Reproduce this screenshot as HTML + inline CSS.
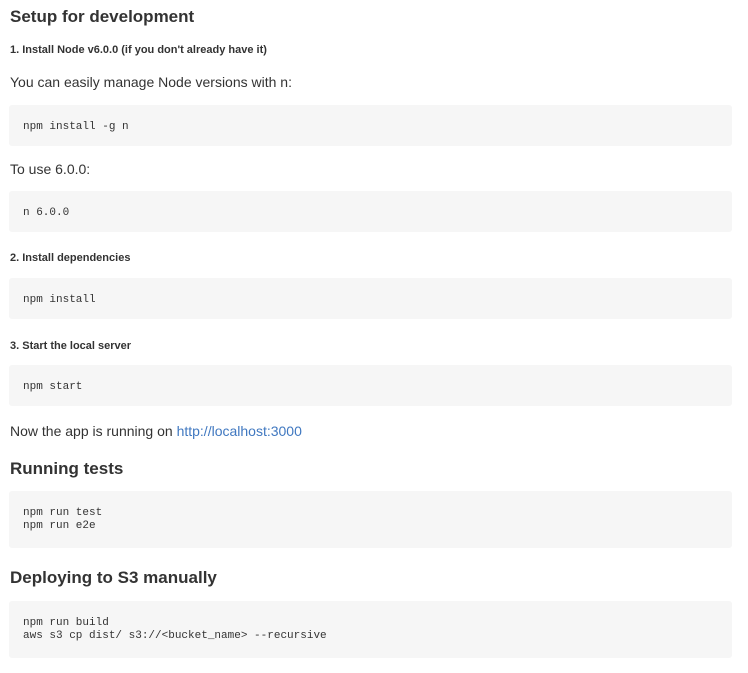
<!DOCTYPE html>
<html><head><meta charset="utf-8"><style>
body{margin:0;background:#fff;width:748px;height:673px;position:relative;overflow:hidden;font-family:"Liberation Sans",sans-serif;color:#333}
.a{position:absolute;left:10px;white-space:nowrap;line-height:1}
h2{font-size:17px;font-weight:bold;margin:0}
.h4{font-size:11px;font-weight:bold}
.p{font-size:14px}
.c{position:absolute;left:9px;width:723px;background:#f6f6f6;border-radius:3px;font-family:"Liberation Mono",monospace;font-size:11px;color:#333;box-sizing:border-box;padding-left:14px;white-space:pre;line-height:13px}
a{color:#4078c0;text-decoration:none}
</style></head><body>
<h2 class="a" style="top:8px">Setup for development</h2>
<div class="a h4" style="top:45px">1. Install Node v6.0.0 (if you don't already have it)</div>
<div class="a p" style="top:75px">You can easily manage Node versions with n:</div>
<div class="c" style="top:105px;height:41px;padding-top:16px">npm install -g n</div>
<div class="a p" style="top:162px">To use 6.0.0:</div>
<div class="c" style="top:191px;height:41px;padding-top:16px">n 6.0.0</div>
<div class="a h4" style="top:253px">2. Install dependencies</div>
<div class="c" style="top:278px;height:41px;padding-top:16px">npm install</div>
<div class="a h4" style="top:341px">3. Start the local server</div>
<div class="c" style="top:365px;height:41px;padding-top:16px">npm start</div>
<div class="a p" style="top:424px">Now the app is running on <a>http://localhost:3000</a></div>
<h2 class="a" style="top:460px">Running tests</h2>
<div class="c" style="top:491px;height:57px;padding-top:16px">npm run test
npm run e2e</div>
<h2 class="a" style="top:569px">Deploying to S3 manually</h2>
<div class="c" style="top:601px;height:57px;padding-top:16px">npm run build
aws s3 cp dist/ s3://&lt;bucket_name&gt; --recursive</div>
</body></html>
